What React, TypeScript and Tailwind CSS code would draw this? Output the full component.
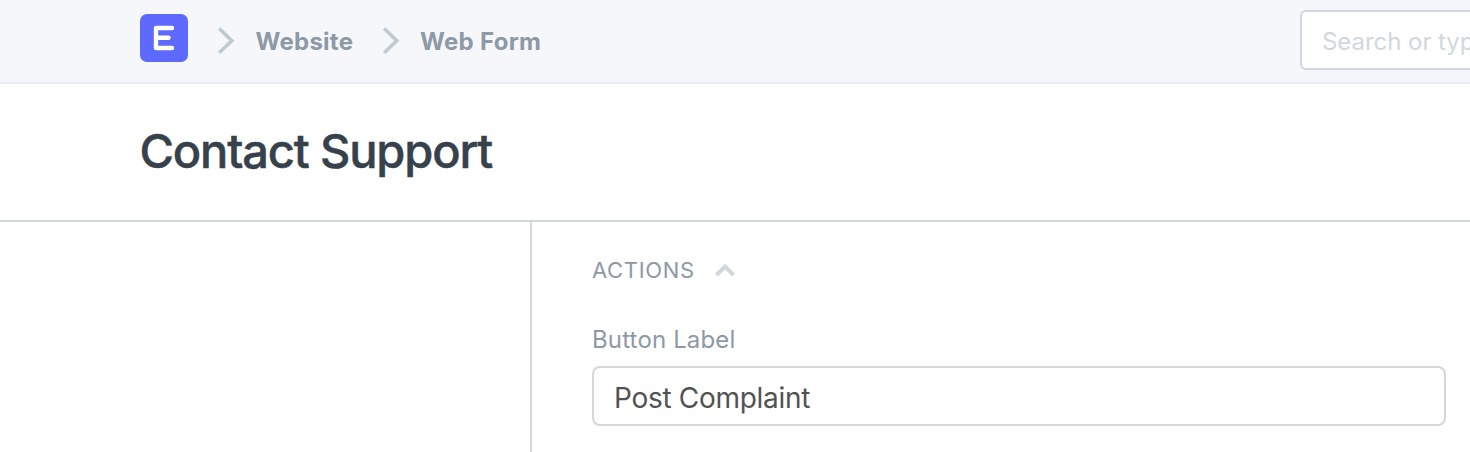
const chevron = (
  <svg className="h-[28px] w-[18px] shrink-0" viewBox="0 0 18 28" fill="none" stroke="#c0c9d1" strokeWidth="3.5">
    <path d="M2.2 1.6 14.8 13.7 2.2 25.8" />
  </svg>
);

export default function App() {
  return (
    <div className="flex h-[452px] w-full flex-col overflow-hidden bg-white font-['Inter',sans-serif] antialiased">
      <header className="flex h-[84px] shrink-0 items-start justify-between border-b-2 border-[#ebeef0] bg-[#f5f7fa] pl-[140px]">
        <nav className="flex items-start">
          <svg className="mt-[14px] h-[48px] w-[48px]" viewBox="0 0 48 48">
            <rect width="48" height="48" rx="7" fill="#5e69ff" />
            <path d="M32 14H16V34H32M16 23.7H28.5" fill="none" stroke="#fff" strokeWidth="4.4" strokeLinecap="round" strokeLinejoin="round" />
          </svg>
          <div className="mt-[27px] ml-[29px]">{chevron}</div>
          <a className="mt-[25px] ml-[20.5px] w-[98px] whitespace-nowrap text-[24px] leading-[34px] font-bold tracking-[0.25px] text-[#8d99a6]">Website</a>
          <div className="mt-[27px] ml-[28.5px]">{chevron}</div>
          <a className="mt-[25px] ml-[20px] whitespace-nowrap text-[24px] leading-[34px] font-bold tracking-[0.3px] text-[#8d99a6]">Web Form</a>
        </nav>
        <div className="mt-[10px] h-[60px] w-[170px] overflow-hidden rounded-l-[6px] border-2 border-r-0 border-[#d1d8dd] bg-white pl-[20px] text-[24px] leading-[60px] tracking-[-0.05px] whitespace-nowrap text-[#d1d8dd]">
          Search or type a command
        </div>
      </header>
      <div className="flex h-[138px] shrink-0 items-center border-b-2 border-[#d1d8dd] pl-[139.5px]">
        <h1 className="mt-[-3px] text-[47px] leading-[60px] font-medium tracking-[-1.15px] text-[#36414c] [-webkit-text-stroke:0.5px_#36414c]">Contact Support</h1>
      </div>
      <div className="flex flex-1">
        <aside className="w-[532px] shrink-0 border-r-2 border-[#d1d8dd]" />
        <main className="flex-1 pr-[24px] pl-[60px]">
          <div className="mt-[32px] flex h-[32px] items-center text-[22px] tracking-[0.65px] text-[#8d99a6]">
            <span>ACTIONS</span>
            <svg className="ml-[20px] h-[14px] w-[20px]" viewBox="0 0 20 14" fill="none" stroke="#d1d8dd" strokeWidth="4">
              <path d="M1.5 12 10 3.5 18.5 12" />
            </svg>
          </div>
          <label className="mt-[38px] block text-[24px] leading-[32px] tracking-[0.15px] text-[#8d99a6]">Button Label</label>
          <div className="mt-[10px] h-[60px] rounded-[8px] border-2 border-[#d1d8dd] pl-[20px] text-[28px] leading-[61px] tracking-[-0.3px] text-[#525252]">Post Complaint</div>
        </main>
      </div>
    </div>
  );
}
